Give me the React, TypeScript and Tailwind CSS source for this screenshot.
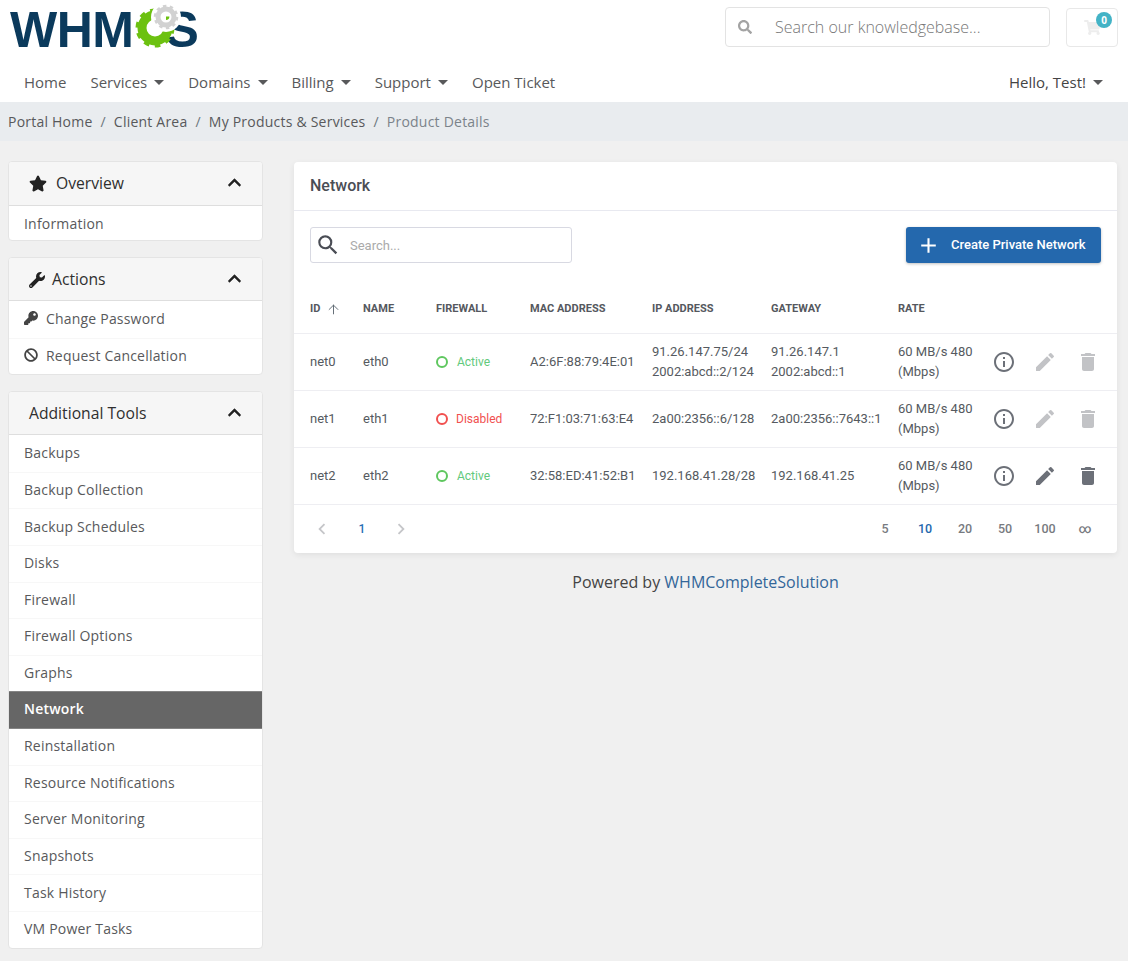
import { FaBan, FaChevronUp, FaKey, FaSearch, FaShoppingCart, FaStar, FaWrench } from "react-icons/fa";
import { MdAdd, MdChevronLeft, MdChevronRight, MdDelete, MdEdit, MdInfoOutline, MdSearch } from "react-icons/md";
import { ArrowUp } from "lucide-react";
import type { ReactNode } from "react";

const openSans = "font-['Open_Sans',sans-serif]";
const roboto = "font-['Roboto',sans-serif]";

const navItems = [
  { label: "Home", caret: false },
  { label: "Services", caret: true },
  { label: "Domains", caret: true },
  { label: "Billing", caret: true },
  { label: "Support", caret: true },
  { label: "Open Ticket", caret: false },
];

const tools = [
  "Backups",
  "Backup Collection",
  "Backup Schedules",
  "Disks",
  "Firewall",
  "Firewall Options",
  "Graphs",
  "Network",
  "Reinstallation",
  "Resource Notifications",
  "Server Monitoring",
  "Snapshots",
  "Task History",
  "VM Power Tasks",
];

const networks = [
  {
    id: "net0",
    name: "eth0",
    active: true,
    mac: "A2:6F:88:79:4E:01",
    ip: ["91.26.147.75/24", "2002:abcd::2/124"],
    gateway: ["91.26.147.1", "2002:abcd::1"],
    editable: false,
  },
  {
    id: "net1",
    name: "eth1",
    active: false,
    mac: "72:F1:03:71:63:E4",
    ip: ["2a00:2356::6/128"],
    gateway: ["2a00:2356::7643::1"],
    editable: false,
  },
  {
    id: "net2",
    name: "eth2",
    active: true,
    mac: "32:58:ED:41:52:B1",
    ip: ["192.168.41.28/28"],
    gateway: ["192.168.41.25"],
    editable: true,
  },
];

const tableCols = "grid grid-cols-[53px_73px_94px_122px_119px_127px_87px_1fr]";

function Logo() {
  return (
    <div className="relative flex items-start h-[50px] w-[190px] text-[#0b3a5c] font-['Liberation_Sans',sans-serif] font-bold text-[50px] leading-[50px] tracking-[-0.5px] mt-[3px] ml-[10px]">
      <span className="mt-[2px]">WHM</span>
      <span className="mt-[2px] ml-[32px]">S</span>
      {/* gears sit over the S */}
      <svg viewBox="0 0 50 50" className="absolute left-[122px] top-0 w-[50px] h-[50px]">
        <circle cx="23" cy="25" r="13" fill="none" stroke="#6cc110" strokeWidth="9" />
        <circle cx="23" cy="25" r="17" fill="none" stroke="#6cc110" strokeWidth="5" strokeDasharray="5.3 5.4" />
        <circle cx="34" cy="14" r="15" fill="#fff" />
        <circle cx="34" cy="14" r="8" fill="none" stroke="#d2d2d2" strokeWidth="5" />
        <circle cx="34" cy="14" r="10.5" fill="none" stroke="#d2d2d2" strokeWidth="3.5" strokeDasharray="3.3 3.3" />
        <path d="M34 17a3.4 3.4 0 0 0 3.4-3.4h-3.4z" fill="#6cc110" />
      </svg>
    </div>
  );
}

function Caret() {
  return <span className="ml-[7px] w-0 h-0 border-x-[5px] border-x-transparent border-t-[5px] border-t-[#58595b]" />;
}

function Header() {
  return (
    <header className={`bg-white h-[102px] ${openSans} text-[#58595b]`}>
      <div className="flex items-start justify-between h-[63px] pt-[7px] pr-[10px]">
        <div className="-mt-[7px]">
          <Logo />
        </div>
        <div className="flex items-start gap-4">
          <div className="flex items-center w-[325px] h-[40px] border border-[#e3e3e3] rounded-[4px] bg-white">
            <FaSearch className="ml-[12px] w-[14px] h-[14px] text-[#a3a3a3]" />
            <span className="ml-[23px] text-[16px] font-light text-[#777]">Search our knowledgebase...</span>
          </div>
          <div className="relative flex items-center justify-center w-[52px] h-[39px] mt-[1px] border border-[#e8e8e8] rounded-[4px]">
            <FaShoppingCart className="w-[17px] h-[15px] text-[#ededed]" />
            <span className="absolute right-[5px] top-[3px] flex items-center justify-center w-[16px] h-[16px] rounded-full bg-[#43b3c6] text-white text-[10px] font-bold">
              0
            </span>
          </div>
        </div>
      </div>
      <nav className="flex items-center justify-between h-[39px] pl-[24px] pr-[25px] text-[15px]">
        <div className="flex items-center gap-6">
          {navItems.map((item) => (
            <div key={item.label} className="flex items-center">
              <span>{item.label}</span>
              {item.caret && <Caret />}
            </div>
          ))}
        </div>
        <div className="flex items-center text-[#444]">
          <span>Hello, Test!</span>
          <Caret />
        </div>
      </nav>
    </header>
  );
}

function Breadcrumb() {
  const links = ["Portal Home", "Client Area", "My Products & Services"];
  return (
    <div className={`flex items-center h-[39px] bg-[#e9ecef] pl-2 text-[14px] tracking-[0.22px] text-[#58595b] ${openSans}`}>
      {links.map((link) => (
        <span key={link} className="flex items-center">
          {link}
          <span className="px-[8px] text-[#6c757d]">/</span>
        </span>
      ))}
      <span className="text-[#7b838a]">Product Details</span>
    </div>
  );
}

function SidePanel({ title, icon, tall, children }: { title: string; icon?: ReactNode; tall?: boolean; children: ReactNode }) {
  return (
    <section className={`bg-white border border-[#e4e4e4] rounded-[4px] overflow-hidden ${openSans}`}>
      <div className={`flex items-center bg-[#f6f6f6] border-b border-[#dedede] px-5 text-[15.7px] text-[#2f2f2f] ${tall ? "h-[44px]" : "h-[43px] pt-[2px]"}`}>
        {icon}
        <span>{title}</span>
        <FaChevronUp className="ml-auto -mt-[3px] w-[15px] h-[15px] text-[#222]" />
      </div>
      {children}
    </section>
  );
}

function SideItem({ label, icon, active, first, short }: { label: string; icon?: ReactNode; active?: boolean; first?: boolean; short?: boolean }) {
  return (
    <div
      className={`flex items-center px-[15px] text-[14px] tracking-[0.2px] ${short ? "h-[34px] pt-[1px]" : active ? "h-[38px] -my-[0.7px] pb-[2px]" : "h-[36.6px] pb-[2px]"} ${
        active ? "relative bg-[#666] text-white font-semibold border-y border-[#858585]" : "text-[#58595b]"
      } ${!active && !first ? "border-t border-[#f7f7f7]" : ""}`}
    >
      {icon}
      {label}
    </div>
  );
}

function Sidebar() {
  return (
    <aside className="flex flex-col gap-[16px] w-[255px] shrink-0">
      <SidePanel title="Overview" tall icon={<FaStar className="w-[18px] h-[17px] mr-[9px] text-[#222]" />}>
        <SideItem label="Information" first short />
      </SidePanel>
      <SidePanel title="Actions" icon={<FaWrench className="w-[16px] h-[16px] mr-[7px] text-[#222]" />}>
        <SideItem first label="Change Password" icon={<FaKey className="w-[14px] h-[14px] mr-[8px] text-[#444]" />} />
        <SideItem label="Request Cancellation" icon={<FaBan className="w-[14px] h-[14px] mr-[8px] text-[#444]" />} />
      </SidePanel>
      <SidePanel title="Additional Tools">
        {tools.map((tool, i) => (
          <SideItem key={tool} label={tool} first={i === 0} active={tool === "Network"} />
        ))}
      </SidePanel>
    </aside>
  );
}

function NetworkTable() {
  return (
    <section className={`bg-white rounded-[4px] shadow-[0_2px_6px_rgba(0,0,0,0.07)] ${roboto} text-[#555a60]`}>
      <h2 className="flex items-center h-[49px] px-4 border-b border-[#e8e9f0] text-[16px] font-medium text-[#4a4d55]">Network</h2>
      <div className="flex items-center justify-between h-[36px] mt-4 px-4">
        <div className="flex items-center w-[262px] h-[36px] border border-[#d8d9e2] rounded-[3px]">
          <MdSearch className="ml-[4px] w-[26px] h-[26px] text-[#4a4d55]" />
          <span className="ml-[9px] pt-[1px] text-[13px] text-[#aaa]">Search...</span>
        </div>
        <button className="flex items-center w-[195px] h-[36px] bg-[#2468ad] rounded-[3px] shadow-[0_1px_3px_rgba(0,0,0,0.25)] text-white text-[13px] font-medium">
          <MdAdd className="ml-[10px] w-[25px] h-[25px]" />
          <span className="ml-[10px]">Create Private Network</span>
        </button>
      </div>
      <div className={`${tableCols} items-center h-[71px] pt-[23px] pl-4 border-b border-[#eeeef2] text-[11px] font-bold uppercase text-[#55585e]`}>
        <span className="flex items-center">
          ID
          <ArrowUp className="ml-[6px] w-[15px] h-[15px] text-[#5c6670]" strokeWidth={1.5} />
        </span>
        <span>Name</span>
        <span>Firewall</span>
        <span>MAC Address</span>
        <span>IP Address</span>
        <span>Gateway</span>
        <span>Rate</span>
      </div>
      {networks.map((net) => (
        <div key={net.id} className={`${tableCols} items-center h-[57px] pl-4 border-b border-[#eeeef2] text-[13px] leading-[20px]`}>
          <span>{net.id}</span>
          <span>{net.name}</span>
          <span className={`flex items-center text-[12px] ${net.active ? "text-[#62c97c]" : "text-[#f1504f]"}`}>
            <span className={`w-[12px] h-[12px] rounded-full border-2 ${net.active ? "border-[#5fc75f] mr-[9px]" : "border-[#f1504f] mr-[8px]"}`} />
            {net.active ? "Active" : "Disabled"}
          </span>
          <span>{net.mac}</span>
          <span>
            {net.ip.map((ip) => (
              <div key={ip}>{ip}</div>
            ))}
          </span>
          <span>
            {net.gateway.map((gw) => (
              <div key={gw}>{gw}</div>
            ))}
          </span>
          <span>
            60 MB/s 480
            <br />
            (Mbps)
          </span>
          <div className="flex items-center pl-[7px]">
            <MdInfoOutline className="w-[24px] h-[24px] text-[#6c7078]" />
            <MdEdit className={`ml-[17px] w-[24px] h-[24px] ${net.editable ? "text-[#6c7078]" : "text-[#c2c3c6]"}`} />
            <MdDelete className={`ml-[19px] w-[24px] h-[24px] ${net.editable ? "text-[#6c7078]" : "text-[#c2c3c6]"}`} />
          </div>
        </div>
      ))}
      <div className="flex items-center justify-between h-[48px] pl-[17px] pr-[12px]">
        <div className="flex items-center">
          <MdChevronLeft className="w-[22px] h-[22px] text-[#c5c6c9]" />
          <span className="ml-[18px] w-[22px] text-center text-[12px] font-medium text-[#2a6fb5]">1</span>
          <MdChevronRight className="ml-[17px] w-[22px] h-[22px] text-[#c5c6c9]" />
        </div>
        <div className="flex items-center text-[12.5px] font-medium text-[#777a80]">
          {["5", "10", "20", "50", "100", "∞"].map((size) => (
            <span key={size} className={`w-[40px] text-center ${size === "10" ? "text-[#2468ad]" : ""}`}>
              {size}
            </span>
          ))}
        </div>
      </div>
    </section>
  );
}

export default function App() {
  return (
    <div className="min-h-[961px] bg-[#f0f0f0]">
      <Header />
      <Breadcrumb />
      <main className="flex gap-[31px] pt-[20px] pl-2 pr-[11px] pb-[12px]">
        <Sidebar />
        <div className="flex-1 min-w-0 pt-[1px]">
          <NetworkTable />
          <p className={`mt-[18px] text-center text-[16px] leading-[22px] text-[#444] ${openSans}`}>
            Powered by <span className="text-[#336699]">WHMCompleteSolution</span>
          </p>
        </div>
      </main>
    </div>
  );
}
